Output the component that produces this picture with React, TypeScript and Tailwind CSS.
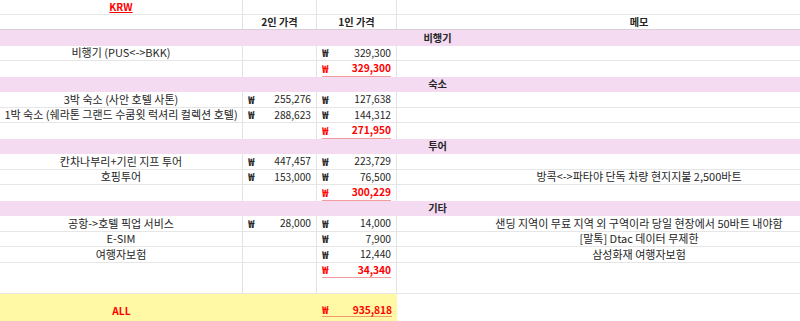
const font = "font-['Noto_Sans_CJK_KR','Noto_Sans',sans-serif]"

type Kind = 'item' | 'sub'

function Won() {
  return <span className="text-[11px] font-semibold">₩</span>
}

function Money({ value }: { value?: string }) {
  if (!value) return null
  return (
    <div className="flex h-full items-center justify-between px-[5px]">
      <Won />
      <span>{value}</span>
    </div>
  )
}

function Row({
  a,
  b,
  c,
  memo,
  kind = 'item',
  h = 'h-[15.5px]',
}: {
  a?: React.ReactNode
  b?: string
  c?: string
  memo?: string
  kind?: Kind
  h?: string
}) {
  const sub = kind === 'sub'
  return (
    <div className={`flex ${h} ${sub ? '' : 'border-b border-[#e6e6e6]'}`}>
      <div className="flex w-[243px] shrink-0 items-center justify-center whitespace-nowrap border-r border-[#e3e3e3] text-[11px]">
        {a}
      </div>
      <div className="w-[74px] shrink-0 border-r border-[#e3e3e3]">
        <Money value={b} />
      </div>
      <div className="w-[80px] shrink-0 border-r border-[#e3e3e3] px-[5px]">
        {sub ? (
          <div className="flex h-full items-center justify-between border-b border-[#f29c9c] font-bold text-[#ff0000]">
            <span className="text-[11px]">₩</span>
            <span>{c}</span>
          </div>
        ) : (
          <div className="flex h-full items-center justify-between">
            {c && <Won />}
            <span>{c}</span>
          </div>
        )}
      </div>
      <div className="w-[81px] shrink-0" />
      <div className="flex flex-1 items-center justify-center whitespace-nowrap text-[11px]">{memo}</div>
    </div>
  )
}

function Section({ label }: { label: string }) {
  return (
    <div className="flex h-[15.5px] bg-[#f4dbf2]">
      <div className="w-[397px] shrink-0" />
      <div className="flex w-[81px] shrink-0 items-center justify-center font-bold">{label}</div>
    </div>
  )
}

export default function App() {
  return (
    <div className={`h-[321px] w-[800px] overflow-hidden bg-white text-[10.2px] leading-none text-[#262626] ${font}`}>
      <Row
        h="h-[14.5px]"
        a={<span className="text-[10.2px] font-bold text-[#ff0000] underline underline-offset-1">KRW</span>}
      />
      {/* header */}
      <div className="flex h-[15.5px] border-b border-[#d6cfd6] font-bold">
        <div className="w-[243px] shrink-0 border-r border-[#e3e3e3]" />
        <div className="flex w-[74px] shrink-0 items-center justify-center border-r border-[#e3e3e3]">2인 가격</div>
        <div className="flex w-[80px] shrink-0 items-center justify-center border-r border-[#e3e3e3]">1인 가격</div>
        <div className="w-[81px] shrink-0" />
        <div className="flex flex-1 items-center justify-center">메모</div>
      </div>

      <Section label="비행기" />
      <Row a="비행기 (PUS<->BKK)" c="329,300" />
      <Row kind="sub" c="329,300" />

      <Section label="숙소" />
      <Row a="3박 숙소 (사안 호텔 사톤)" b="255,276" c="127,638" />
      <Row a="1박 숙소 (쉐라톤 그랜드 수쿰윗 럭셔리 컬렉션 호텔)" b="288,623" c="144,312" />
      <Row kind="sub" c="271,950" />

      <Section label="투어" />
      <Row a="칸차나부리+기린 지프 투어" b="447,457" c="223,729" />
      <Row a="호핑투어" b="153,000" c="76,500" memo="방콕<->파타야 단독 차량 현지지불 2,500바트" />
      <Row kind="sub" c="300,229" />

      <Section label="기타" />
      <Row a="공항->호텔 픽업 서비스" b="28,000" c="14,000" memo="샌딩 지역이 무료 지역 외 구역이라 당일 현장에서 50바트 내야함" />
      <Row a="E-SIM" c="7,900" memo="[말톡] Dtac 데이터 무제한" />
      <Row a="여행자보험" c="12,440" memo="삼성화재 여행자보험" />
      <Row kind="sub" c="34,340" />
      <Row />

      {/* total */}
      <div className="flex h-[28px]">
        <div className="flex w-[397px] shrink-0 items-end bg-[#fff9a6] pb-[5px] font-bold text-[#ff0000]">
          <div className="flex w-[243px] justify-center leading-[13px]">ALL</div>
          <div className="w-[74px]" />
          <div className="w-[80px] px-[5px]">
            <div className="flex items-center justify-between border-b border-[#ee9a6a] leading-[13px]">
              <span className="text-[11px]">₩</span>
              <span>935,818</span>
            </div>
          </div>
        </div>
      </div>
    </div>
  )
}
